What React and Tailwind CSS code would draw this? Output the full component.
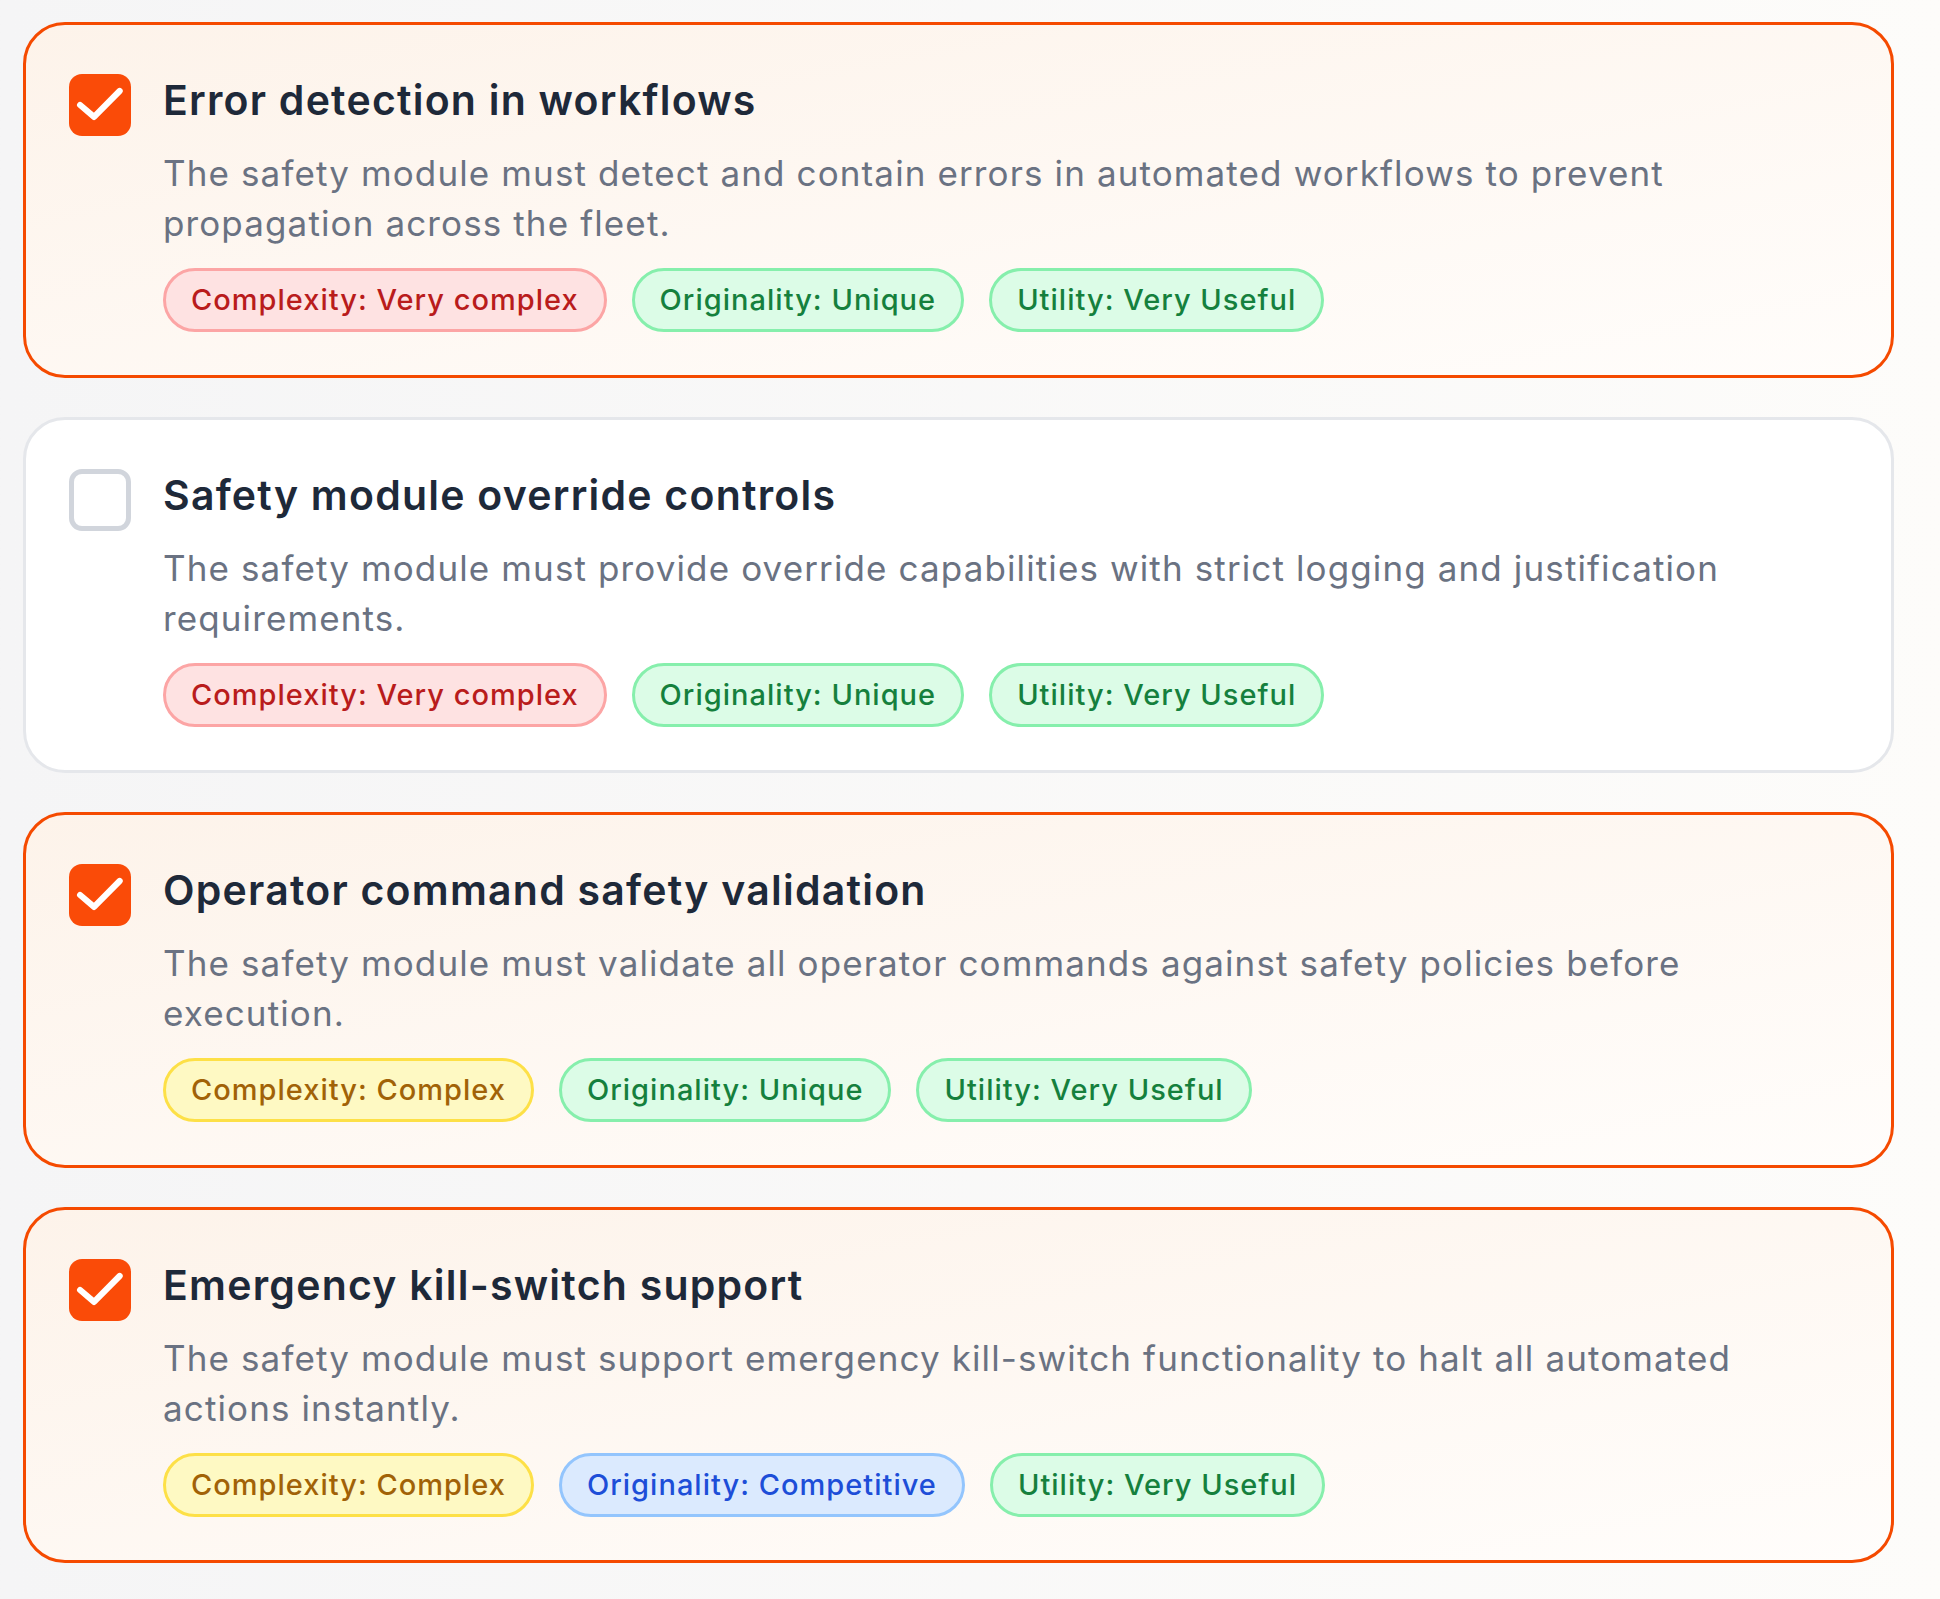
import React from "react";

const TONES = {
  red: "bg-[#fee2e2] border-[#fca5a5] text-[#b91c1c]",
  green: "bg-[#dcfce7] border-[#86efac] text-[#15803d]",
  yellow: "bg-[#fef9c3] border-[#fde047] text-[#a16207]",
  blue: "bg-[#dbeafe] border-[#93c5fd] text-[#1d4ed8]",
};

const ITEMS = [
  {
    title: "Error detection in workflows",
    desc: "The safety module must detect and contain errors in automated workflows to prevent propagation across the fleet.",
    checked: true,
    tags: [["red", "Complexity: Very complex"], ["green", "Originality: Unique"], ["green", "Utility: Very Useful"]],
  },
  {
    title: "Safety module override controls",
    desc: "The safety module must provide override capabilities with strict logging and justification requirements.",
    checked: false,
    tags: [["red", "Complexity: Very complex"], ["green", "Originality: Unique"], ["green", "Utility: Very Useful"]],
  },
  {
    title: "Operator command safety validation",
    desc: "The safety module must validate all operator commands against safety policies before execution.",
    checked: true,
    tags: [["yellow", "Complexity: Complex"], ["green", "Originality: Unique"], ["green", "Utility: Very Useful"]],
  },
  {
    title: "Emergency kill-switch support",
    desc: "The safety module must support emergency kill-switch functionality to halt all automated actions instantly.",
    checked: true,
    tags: [["yellow", "Complexity: Complex"], ["blue", "Originality: Competitive"], ["green", "Utility: Very Useful"]],
  },
];

function Checkbox({ checked }) {
  if (!checked) {
    return <div className="w-[62px] h-[62px] shrink-0 mt-[3px] rounded-[13px] border-[5px] border-[#d1d5dc] bg-white" />;
  }
  return (
    <div className="w-[62px] h-[62px] shrink-0 mt-[3px] rounded-[13px] bg-[#fa4b08] flex items-center justify-center">
      <svg viewBox="0 0 24 24" className="w-[62px] h-[62px]" fill="none" stroke="white" strokeWidth="2.4" strokeLinecap="round" strokeLinejoin="round">
        <path d="M19.6 6.6 9.7 16.6 4.3 12" />
      </svg>
    </div>
  );
}

function Card({ item }) {
  return (
    <div
      className={`flex gap-[32px] rounded-[42px] border-[3px] px-[43px] pt-[46px] pb-[43px] ${
        item.checked ? "border-[#f54a00] bg-linear-to-br from-[#fdf3ea] to-[#fffdfb]" : "border-[#e5e7eb] bg-white"
      }`}
    >
      <Checkbox checked={item.checked} />
      <div className="flex-1 min-w-0">
        <div className="text-[41px] leading-[58px] font-semibold tracking-[0.03em] text-[#1e2939]">{item.title}</div>
        <p className="mt-[19px] max-w-[1620px] text-[35px] leading-[50px] tracking-[0.032em] text-[#6a7282]">{item.desc}</p>
        <div className="mt-[20px] flex gap-[25px]">
          {item.tags.map(([tone, label]) => (
            <span key={label} className={`h-[64px] flex items-center rounded-full border-[3px] px-[25px] text-[29px] font-medium tracking-[0.035em] ${TONES[tone]}`}>
              {label}
            </span>
          ))}
        </div>
      </div>
    </div>
  );
}

export default function App() {
  return (
    <div className="min-h-screen bg-linear-to-r from-[#f5f5f6] to-[#fdfcfa] pl-[23px] pr-[46px] pt-[22px] pb-[35px] flex flex-col gap-[39px] font-[Inter,'Noto_Sans',sans-serif]">
      {ITEMS.map((it) => (
        <Card key={it.title} item={it} />
      ))}
    </div>
  );
}
